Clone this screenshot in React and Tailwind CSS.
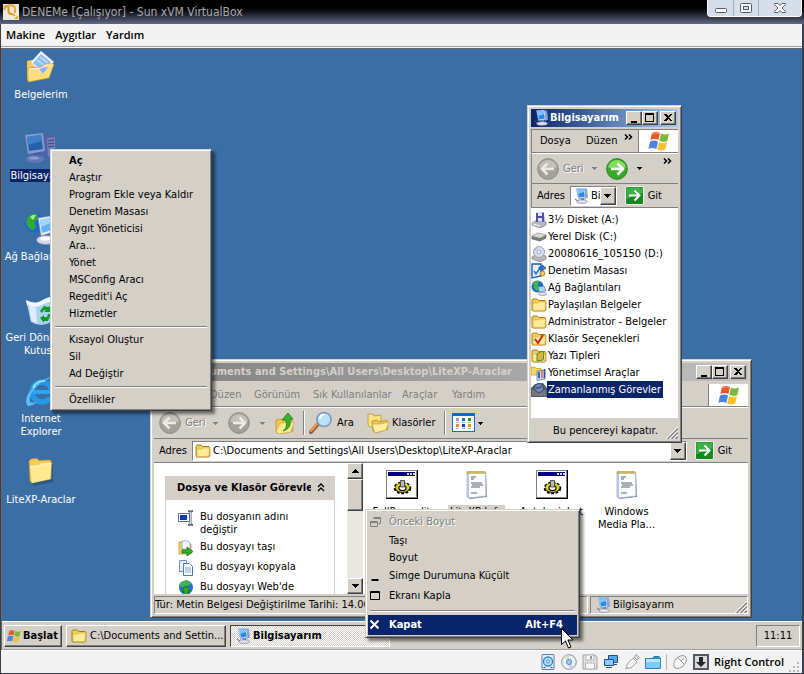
import { clsx } from 'clsx'

const raised = 'bg-[#d4d0c8] border border-t-white border-l-white border-r-[#404040] border-b-[#404040] shadow-[inset_-1px_-1px_0_#808080]'
const sunken = 'border border-t-[#808080] border-l-[#808080] border-r-white border-b-white'
const frame = 'bg-[#d4d0c8] border border-t-[#d4d0c8] border-l-[#d4d0c8] border-r-[#404040] border-b-[#404040] shadow-[inset_1px_1px_0_#fff,inset_-1px_-1px_0_#808080]'
const menuFrame = 'bg-[#d4d0c8] border border-t-[#d4d0c8] border-l-[#d4d0c8] border-r-[#404040] border-b-[#404040] shadow-[inset_1px_1px_0_#fff,inset_-1px_-1px_0_#808080,3px_3px_3px_rgba(0,0,0,0.5)]'
const embossed = 'text-[#808080] [text-shadow:1px_1px_0_#fff]'

/* ---------- icons ---------- */

function Folder({ className = 'size-4' }) {
  return (
    <svg viewBox="0 0 16 16" className={clsx('shrink-0', className)}>
      <path d="M1 3.200 2 2h4.200l1.300 1.500H14l.8 1V13l-1 1H1.800L1 13z" fill="#f3cf5b" stroke="#a87c14" />
      <path d="M2 6h5.200l1-1h6.300L14 13.400H2z" fill="#fdeb9a" stroke="#d9ac39" strokeWidth=".6" />
    </svg>
  )
}

function BigFolder() {
  return (
    <svg viewBox="0 0 32 32" className="size-8 shrink-0">
      <path d="M6 8l2-2 20 2v18L9 30l-2-2z" fill="#0003" />
      <path d="M4 5l2-2 6-.6L14 4.500l11-.5 1.500 2L26 23 7 27l-2-2z" fill="#f2cc58" stroke="#c29623" strokeWidth=".6" />
      <path d="M5 10l8-.5 3-2 10.500-.5L25 23 7 27z" fill="#ffe993" />
      <path d="M5.500 10.500l8-.5 3-2 9.500-.5" fill="none" stroke="#fff7cf" />
    </svg>
  )
}

function Documents() {
  return (
    <svg viewBox="0 0 32 32" className="size-8 shrink-0">
      <path d="M2 10l5-1 3 2v17l-6 2-2-2z" fill="#f3c95b" />
      <path d="M16 0 29 11 17 24 6 11z" fill="#eef5ff" />
      <path d="M16 3 26 11 17 20 8 12z" fill="#8fbdf5" />
      <path d="M15 6l8 6M12 9l8 6" stroke="#c7e0ff" strokeWidth="1.500" />
      <path d="M3 17l13-1 5-3 8 0-5 14-21 4z" fill="#ffdf7c" stroke="#c9962a" strokeWidth=".7" />
      <path d="M14 17l9-1-5 7z" fill="#7fb8ee" />
      <path d="M4 18l12-1 5-3 7 0" fill="none" stroke="#fff5c6" />
    </svg>
  )
}

function BigComputer() {
  return (
    <svg viewBox="0 0 32 32" className="size-8 shrink-0">
      <path d="M19 3l8-1 4 2v19l-8 3-4-2z" fill="#5362a4" />
      <path d="M22 6l8-1v17l-7 3z" fill="#7480b9" />
      <path d="M23 9l6-1M23 12l6-1M23 15l6-1" stroke="#394582" />
      <path d="M0 3l18-2 2 18-17 3z" fill="#8a98c9" />
      <path d="M2 5l14-2 2 14-14 2z" fill="#2361b0" />
      <path d="M2 5l14-2 .8 6L3 13z" fill="#3f80c8" />
      <path d="M9 21h6l1 5H9z" fill="#4b57a1" />
      <ellipse cx="10" cy="27" rx="9" ry="3.800" fill="#6775b5" />
      <ellipse cx="9" cy="26" rx="5" ry="1.600" fill="#8f9bd0" />
    </svg>
  )
}

function BigNetwork() {
  return (
    <svg viewBox="0 0 32 32" className="size-8 shrink-0">
      <circle cx="10" cy="10" r="10" fill="#1f68d4" />
      <path d="M2 5q5-5 10-4l1 5-4 3 2 4-3 5-5-4-2-5z" fill="#35a936" />
      <path d="M5 4q3-3 6-2l-3 5z" fill="#a8ec86" />
      <path d="M13 5l18-3v16l-15 5z" fill="#e7ecf8" stroke="#7684ad" strokeWidth=".6" />
      <path d="M15 7l15-3v12l-13 4z" fill="#63b2f4" />
      <path d="M15 7l15-3v4l-14 6z" fill="#9ed5ff" />
      <ellipse cx="21" cy="27" rx="9.500" ry="4.500" fill="#d6d7ee" stroke="#8689ae" strokeWidth=".6" />
      <ellipse cx="20" cy="25.500" rx="5" ry="2" fill="#fff" />
    </svg>
  )
}

function RecycleBin() {
  return (
    <svg viewBox="0 0 32 32" className="size-8 shrink-0">
      <path d="M1 6q9 5 15 1t15-5l-5 26q-10 6-20 0z" fill="#a9d3f4" />
      <path d="M1 6q9 5 15 1t15-5l-1 5q-6 0-13 4T2 11z" fill="#edf8ff" />
      <path d="M4 12l7 2 1 15-6-2z" fill="#fff" opacity=".6" />
      <path d="M15 17l4-5 4 1 2-1v6h-6l2-2h-2l-2 3zM26 20l-3 7h-4v2l-4-5 4-3v2h3l1-3z" fill="#159a20" />
    </svg>
  )
}

function InternetExplorer() {
  return (
    <svg viewBox="0 0 32 32" className="size-8 shrink-0">
      <circle cx="17" cy="17" r="10" fill="none" stroke="#2497e6" strokeWidth="5.500" />
      <path d="M8 15h22v4H8z" fill="#2da5f0" />
      <path d="M20 22h12v-3H20z" fill="#3a6ea5" />
      <path d="M2 30Q-2 22 10 11T31 3q-10-1-19 8T5 27q3 2 8-1-8 7-11 4z" fill="#56c2fb" />
      <path d="M8 13q3-8 12-7" stroke="#a9e5ff" strokeWidth="1.500" fill="none" />
    </svg>
  )
}

function Computer({ className = 'size-4' }) {
  return (
    <svg viewBox="0 0 16 16" className={clsx('shrink-0', className)}>
      <path d="M10 1l4-.5 1 9-3 1.500z" fill="#8da7d5" />
      <path d="M3.500.5l8-.5 1.500 9.500-7.500 1.300z" fill="#dbe8fa" stroke="#6383bd" strokeWidth=".5" />
      <path d="M4.500 1.400l6-.5 1.300 7.600-5.800 1z" fill="#2b87e6" />
      <path d="M4.500 1.400l6-.5.6 3.200L5 6z" fill="#7cc4ff" />
      <path d="M7.500 10.500l3.500-.5.5 2.500H8z" fill="#7080b0" />
      <ellipse cx="9" cy="13.600" rx="5.500" ry="1.900" fill="#dfe3ef" stroke="#6c7696" strokeWidth=".6" />
      <path d="M2 11l3 2" stroke="#59679a" />
    </svg>
  )
}

function WindowsFlag({ className = 'h-5 w-6' }) {
  return (
    <svg viewBox="0 0 24 20" className={clsx('shrink-0', className)}>
      <path d="M5 2q4-2 8 0l-1.600 7q-4-2-8 0z" fill="#e8572b" />
      <path d="M14 2.500q4 2 8 0L20.300 10q-4 2-8-.2z" fill="#7cb93a" />
      <path d="M3 10.500q4-2 8 0L9.400 18q-4-2-8 0z" fill="#4a86dd" />
      <path d="M12 11q4 2 8 0l-1.700 7.400q-4 2-8 0z" fill="#f8c22e" />
      <path d="M5 3q3-2 7-.5" stroke="#f59a72" fill="none" />
    </svg>
  )
}

function RoundArrow({ forward, active }) {
  return (
    <svg viewBox="0 0 22 22" className="size-[22px] shrink-0">
      <circle cx="11" cy="11" r="10.400" fill={active ? '#37a926' : '#a3a19c'} stroke={active ? '#237a1a' : '#86847f'} strokeWidth=".8" />
      <path d="M2 9a9.300 9.300 0 0 1 18 0q-9 6-18 0z" fill={active ? '#86db66' : '#c2c0bb'} />
      <path d={forward ? 'M5 11h11M11.500 5.500 17 11l-5.500 5.500' : 'M17 11H6M10.500 5.500 5 11l5.500 5.500'} fill="none" stroke={active ? '#fff' : '#ebe9e4'} strokeWidth="2.600" />
    </svg>
  )
}

function Caret({ className = 'text-black' }) {
  return (
    <svg viewBox="0 0 7 4" className={clsx('h-1 w-[7px] shrink-0', className)} shapeRendering="crispEdges">
      <path d="M0 0h7L3.500 4z" fill="currentColor" />
    </svg>
  )
}

function SmallCaret({ className = 'text-black' }) {
  return (
    <svg viewBox="0 0 5 3" className={clsx('h-[3px] w-[5px] shrink-0', className)} shapeRendering="crispEdges">
      <path d="M0 0h5L2.500 3z" fill="currentColor" />
    </svg>
  )
}

function FolderUp() {
  return (
    <svg viewBox="0 0 20 22" className="h-[22px] w-5 shrink-0">
      <path d="M1 8l6-1 2 2 8-1 1 11-14 3-3-2z" fill="#f0c74f" stroke="#b98e23" strokeWidth=".7" />
      <path d="M1 20l4-9 14-1-3 10-12 2z" fill="#ffe88e" stroke="#c79b2f" strokeWidth=".6" />
      <path d="M8 19q5-3 3-11H7l6-7 5 6-3 .5q2 9-7 11.500z" fill="#34b52a" stroke="#127212" strokeWidth=".7" />
    </svg>
  )
}

function Magnifier() {
  return (
    <svg viewBox="0 0 24 24" className="size-6 shrink-0">
      <path d="M2 21 9 13" stroke="#8a5d36" strokeWidth="4" strokeLinecap="round" />
      <path d="M2 20 8 13" stroke="#ef9a4c" strokeWidth="2" strokeLinecap="round" />
      <circle cx="15" cy="8.500" r="7" fill="#b9e3fb" stroke="#7b93c9" strokeWidth="1.600" />
      <path d="M10.500 8q1-4 5-4.500" stroke="#fff" strokeWidth="2" fill="none" />
    </svg>
  )
}

function FoldersIcon() {
  return (
    <svg viewBox="0 0 24 22" className="h-[22px] w-6 shrink-0">
      <path d="M2 2l5 0 1 2 7-1 0 10-11 2-2-2z" fill="#ffe283" stroke="#bd932c" strokeWidth=".8" />
      <path d="M6 9l5-1 2 2 8-2 1 9-12 4-3-2z" fill="#f1c952" stroke="#b78b23" strokeWidth=".8" />
      <path d="M6 12l8 0 9-2-3 8-11 3z" fill="#ffeda0" stroke="#c59b36" strokeWidth=".6" />
    </svg>
  )
}

function Views() {
  return (
    <svg viewBox="0 0 24 20" className="h-5 w-6 shrink-0" shapeRendering="crispEdges">
      <path d="M0 0h23v19H0z" fill="#1766d8" />
      <path d="M1 3h21v15H1z" fill="#fff" />
      <path d="M4 5h3v3H4z" fill="#a396cf" />
      <path d="M10 5h3v3h-3z" fill="#167cd4" />
      <path d="M16 5h3v3h-3z" fill="#169b1b" />
      <path d="M4 11h3v3H4z" fill="#fb7c52" />
      <path d="M10 11h3v3h-3z" fill="#173c9c" />
      <path d="M16 11h3v3h-3z" fill="#d39d0b" />
      <path d="M4 9h3v1H4zM10 9h3v1h-3zM16 9h3v1h-3zM4 15h3v1H4zM10 15h3v1h-3zM16 15h3v1h-3z" fill="#b4b4b4" />
    </svg>
  )
}

function GoIcon() {
  return (
    <svg viewBox="0 0 19 19" className="size-[19px] shrink-0">
      <rect x=".5" y=".5" width="18" height="18" rx="1.500" fill="#128a1c" stroke="#e9f4e6" />
      <path d="M1.500 1.500h16v6q-8 0-16 6z" fill="#3fae49" />
      <path d="M4 9.500h10M9.500 4.500l5 5-5 5" fill="none" stroke="#fff" strokeWidth="2" />
    </svg>
  )
}

function Grip() {
  return (
    <svg viewBox="0 0 12 12" className="size-3 shrink-0 self-end">
      <path d="M0 12 12 0M4 12l8-8M8 12l4-4" stroke="#fff" strokeWidth="1.200" />
      <path d="M1.500 12 12 1.500M5.500 12 12 5.500M9.500 12 12 9.500" stroke="#808080" strokeWidth="1.400" />
    </svg>
  )
}

function GearApp() {
  return (
    <svg viewBox="0 0 32 30" className="h-[30px] w-8 shrink-0">
      <g shapeRendering="crispEdges">
        <path d="M0 0h32v29H0z" fill="#000" />
        <path d="M0 0h31v28H0z" fill="#808080" />
        <path d="M1 1h29v26H1z" fill="#fff" />
        <path d="M2 2h27v4H2z" fill="#000080" />
        <path d="M21 3h2v2h-2zM24 3h2v2h-2zM27 3h2v2h-2z" fill="#d4d0c8" />
      </g>
      <ellipse cx="16.500" cy="18" rx="7.500" ry="5" fill="#000" stroke="#000" strokeWidth="2.600" strokeDasharray="2.600 1.600" />
      <ellipse cx="16.500" cy="17.500" rx="7" ry="4.500" fill="#e2da1d" stroke="#77720c" strokeWidth=".8" strokeDasharray="2 1.500" />
      <ellipse cx="16.500" cy="18" rx="3.600" ry="2.500" fill="#fff" stroke="#000" strokeWidth="1.200" />
      <path d="M14.500 10.500h4V17h-4z" fill="#b9b9b9" stroke="#333" strokeWidth=".8" />
    </svg>
  )
}

function NotepadFile() {
  return (
    <svg viewBox="0 0 32 30" className="h-[30px] w-8 shrink-0">
      <path d="M7 2h18l1 25-17 2-2-1z" fill="#7f8fa5" />
      <path d="M6 2h18.500L25 26l-16 2-3-1z" fill="#fbfdff" stroke="#9fb1cc" strokeWidth=".8" />
      <path d="M6 2v25l2 1V2z" fill="#b6c6e8" />
      <path d="M10 7h5M10 9h3M10 13h11M11 15h11M10 17h9M10 23h6" stroke="#59626c" />
      <path d="M7 1v3M9 1v3M11 1v3M13 1v3M15 1v3M17 1v3M19 1v3M21 1v3M23 1v3" stroke="#c79a19" strokeWidth="1.200" />
    </svg>
  )
}

function Floppy() {
  return (
    <svg viewBox="0 0 16 16" className="size-4 shrink-0">
      <path d="M1 11l5-3 9 2v3l-6 3-8-3z" fill="#b7b7bd" stroke="#6f6f78" strokeWidth=".6" />
      <path d="M5 1l8-.5.5 9L5 10z" fill="#4d50a7" />
      <path d="M7 1h4v3H7zM7 6h4v3.500H7z" fill="#e4e4f4" />
      <path d="M2 12l7 2" stroke="#fff" />
    </svg>
  )
}

function Drive() {
  return (
    <svg viewBox="0 0 16 16" className="size-4 shrink-0">
      <path d="M1 7l6-3 8 2v3l-6 3-8-2z" fill="#7c7c7c" stroke="#555" strokeWidth=".6" />
      <path d="M1 7l6-3 8 2-6 3z" fill="#d7d7d7" />
      <path d="M11 10h2" stroke="#43c743" />
    </svg>
  )
}

function CdDrive() {
  return (
    <svg viewBox="0 0 16 16" className="size-4 shrink-0">
      <path d="M1 11l5-3 9 2v3l-6 3-8-3z" fill="#b9b9bf" stroke="#6f6f78" strokeWidth=".6" />
      <circle cx="8" cy="6" r="5.500" fill="#dcdcf4" stroke="#8585a6" strokeWidth=".7" />
      <circle cx="8" cy="6" r="1.800" fill="#fff" stroke="#8585a6" strokeWidth=".7" />
      <path d="M4 4q1-2 3-2" stroke="#b5a4e8" fill="none" />
    </svg>
  )
}

function ControlPanel() {
  return (
    <svg viewBox="0 0 16 16" className="size-4 shrink-0">
      <path d="M1 1h9v12l-9 2z" fill="#e6f1ff" stroke="#1b5fae" strokeWidth="1.400" />
      <path d="M3 8l2 3 4-6" stroke="#2675cc" strokeWidth="1.500" fill="none" />
      <path d="M8 4h3V2l4 3-4 3V6H8z" fill="#2f7fd6" stroke="#174f91" strokeWidth=".8" />
      <circle cx="11.500" cy="10.500" r="2.500" fill="#f6cb55" stroke="#926414" strokeWidth=".7" />
    </svg>
  )
}

function NetGlobe() {
  return (
    <svg viewBox="0 0 16 16" className="size-4 shrink-0">
      <circle cx="6.500" cy="6.500" r="6" fill="#1d6ec9" />
      <path d="M2 3q3-3 6-2l-1 4 2 3-3 3-3-3z" fill="#3cb54a" />
      <path d="M7 7l6-1 2 5-7 1z" fill="#a5d8fb" stroke="#4d6b9d" strokeWidth=".6" />
      <ellipse cx="11.500" cy="14" rx="4" ry="1.600" fill="#dedeee" stroke="#777b9c" strokeWidth=".6" />
    </svg>
  )
}

function FolderWith({ children }) {
  return (
    <svg viewBox="0 0 16 16" className="size-4 shrink-0">
      <path d="M1 3.200 2 2h4.200l1.300 1.500H14l.8 1V13l-1 1H1.800L1 13z" fill="#f3cf5b" stroke="#a87c14" />
      <path d="M2 6h5.200l1-1h6.300L14 13.400H2z" fill="#fdeb9a" stroke="#d9ac39" strokeWidth=".6" />
      {children}
    </svg>
  )
}

function AdminTools() {
  return (
    <svg viewBox="0 0 16 16" className="size-4 shrink-0">
      <path d="M0 2h4l1 1.500h5V10H0z" fill="#f6d565" stroke="#c09226" strokeWidth=".7" />
      <path d="M6 6l8-1v9l-8 1.500z" fill="#c8d6f2" stroke="#5067a0" strokeWidth=".7" />
      <path d="M8 7v6" stroke="#3563c8" strokeWidth="2" />
      <path d="M11 5v8" stroke="#e06a2d" strokeWidth="1.500" />
      <path d="M13.500 4v9" stroke="#2d52a0" strokeWidth="1.500" />
    </svg>
  )
}

function Scheduled() {
  return (
    <svg viewBox="0 0 16 16" className="size-4 shrink-0">
      <path d="M0 6 4 2l8-1 4 5v9H0z" fill="#4e5b6b" />
      <path d="M1 8h14v6H1z" fill="#74777b" />
      <circle cx="8" cy="6" r="4.500" fill="#6e89b5" stroke="#39475f" />
      <path d="M8 6l3-2M8 6H5" stroke="#223150" />
    </svg>
  )
}

function RenameIcon() {
  return (
    <svg viewBox="0 0 16 16" className="size-4 shrink-0">
      <path d="M.5 3.500h11v8H.5z" fill="#fff" stroke="#5c6b9c" />
      <path d="M2 5h7v5H2z" fill="#0b3bb5" />
      <path d="M10 1q2 0 2.500 1Q13 1 15 1M12.500 2v12M10 15q2 0 2.500-1 .5 1 2.500 1" fill="none" stroke="#5e6682" strokeWidth="2" />
      <path d="M12.500 2v12" stroke="#c9cfe4" />
    </svg>
  )
}

function MoveIcon() {
  return (
    <svg viewBox="0 0 16 16" className="size-4 shrink-0">
      <path d="M1 2h5l1 2h6v10H1z" fill="#f4d36d" stroke="#b78b25" strokeWidth=".7" />
      <path d="M4 1h6l2 2v6H4z" fill="#f4f9ff" stroke="#7790bb" strokeWidth=".7" />
      <path d="M4 10h5V7l6 4.500L9 16v-3H4z" fill="#2fb129" stroke="#0e6a10" strokeWidth=".7" />
    </svg>
  )
}

function CopyIcon() {
  return (
    <svg viewBox="0 0 16 16" className="size-4 shrink-0">
      <path d="M1.500.500h7v11h-7z" fill="#e8f1ff" stroke="#6c8fc8" />
      <path d="M5.500 3.500h6l3 3v9h-9z" fill="#fff" stroke="#4a78be" />
      <path d="M7 8h6M7 10h6M7 12h6" stroke="#7aa6e3" />
    </svg>
  )
}

function WebIcon() {
  return (
    <svg viewBox="0 0 16 16" className="size-4 shrink-0">
      <circle cx="8" cy="7.500" r="7" fill="#2674cb" />
      <path d="M2 3q5-4 9-2l2 3-4 2-5 1-3-1z" fill="#3fb448" />
      <path d="M8 6l5 5h-3v5H6v-5H3z" fill="#2dac27" stroke="#0f6412" strokeWidth=".7" />
    </svg>
  )
}

function VBoxLogo() {
  return (
    <svg viewBox="0 0 16 16" className="size-4 shrink-0">
      <path d="M0 0h16v16H0z" fill="#efe8dd" />
      <path d="M1.500 6V5q0-3 2-3t2 3v2q0 3 3 3 2 0 3 2" fill="none" stroke="#e39a1f" strokeWidth="2" />
      <path d="M5 1.500q7-1 7 3V9" fill="none" stroke="#f2a933" strokeWidth="2" />
      <path d="M11 15l4 0v-4z" fill="#f2a51d" />
    </svg>
  )
}

function Chevrons() {
  return (
    <svg viewBox="0 0 9 6" className="h-1.5 w-[9px] shrink-0">
      <path d="M1 .5 3.500 3 1 5.500M5 .5 7.500 3 5 5.500" fill="none" stroke="#000" strokeWidth="1.500" />
    </svg>
  )
}

/* ---------- window parts ---------- */

const glyphs = {
  min: 'M2 8h6v2H2z',
  max: 'M0 0h9v9H0zM1 2v6h7V2z',
  close: 'M1 1h2l2 2 2-2h2L6 4.500l3 3.500H7L5 6 3 8H1l3-3.500z',
}

function CaptionButton({ kind, label }) {
  return (
    <button type="button" aria-label={label} className={clsx('flex h-[14px] w-4 items-center justify-center', raised)}>
      <svg viewBox="0 0 10 10" className="size-[10px]" shapeRendering="crispEdges">
        <path d={glyphs[kind]} fillRule="evenodd" />
      </svg>
    </button>
  )
}

function CaptionButtons() {
  return (
    <div className="ml-auto flex shrink-0 pr-0.5">
      <CaptionButton kind="min" label="Simge durumuna küçült" />
      <CaptionButton kind="max" label="Ekranı kapla" />
      <span className="w-0.5" />
      <CaptionButton kind="close" label="Kapat" />
    </div>
  )
}

function AddressBar({ value, icon, id }) {
  return (
    <div className="flex h-6 items-center border-b border-[#808080] pl-[5px] pr-4">
      <label htmlFor={id} className="w-[33px] shrink-0">Adres</label>
      <div className={clsx('flex h-5 min-w-0 flex-1 items-center bg-white pl-0.5', sunken)}>
        {icon}
        <input id={id} defaultValue={value} className="ml-0.5 min-w-0 flex-1 bg-transparent outline-none" />
        <button type="button" aria-label="Adres listesi" className={clsx('flex h-[18px] w-4 shrink-0 items-center justify-center', raised)}>
          <Caret />
        </button>
      </div>
      <button type="button" className="ml-2 flex items-center gap-1">
        <GoIcon /> Git
      </button>
    </div>
  )
}

function FileItem({ icon, label, selected }) {
  return (
    <button type="button" className="flex w-[75px] flex-col items-center gap-[5px] leading-[13px]">
      {icon}
      <span className={clsx('px-0.5', selected && 'bg-[#d4d0c8]')}>{label}</span>
    </button>
  )
}

const tasks = [
  { icon: <RenameIcon />, label: 'Bu dosyanın adını değiştir' },
  { icon: <MoveIcon />, label: 'Bu dosyayı taşı' },
  { icon: <CopyIcon />, label: 'Bu dosyayı kopyala' },
  { icon: <WebIcon />, label: "Bu dosyayı Web'de yayımla" },
]

function ExplorerWindow() {
  return (
    <section className={clsx('absolute left-[148px] top-[310px] flex h-[259px] w-[602px] flex-col p-[3px]', frame)}>
      <header className="flex h-[18px] shrink-0 items-center bg-linear-to-r from-[#808080] to-[#c0c0c0] pl-5 font-bold text-[#d4d0c8]">
        <h2 className="whitespace-nowrap">C:\Documents and Settings\All Users\Desktop\LiteXP-Araclar</h2>
        <CaptionButtons />
      </header>
      <nav className="mt-[3px] flex h-[23px] shrink-0 items-center border-b border-[#808080] pl-1.5 text-[#808080]">
        <button type="button" className="w-[50px] text-left">Dosya</button>
        <button type="button" className="w-11 text-left">Düzen</button>
        <button type="button" className="w-[59px] text-left">Görünüm</button>
        <button type="button" className="w-[89px] whitespace-nowrap text-left">Sık Kullanılanlar</button>
        <button type="button" className="w-[50px] text-left">Araçlar</button>
        <button type="button">Yardım</button>
        <span className="ml-auto flex h-full w-10 items-center justify-center border-l border-[#808080] bg-white">
          <WindowsFlag />
        </span>
      </nav>
      <div className="flex h-8 shrink-0 items-center border-b border-t border-b-[#808080] border-t-white pl-[5px]">
        <button type="button" disabled className={clsx('flex w-[54px] items-center gap-1', embossed)}>
          <RoundArrow /> Geri
        </button>
        <SmallCaret className="text-[#808080]" />
        <button type="button" disabled aria-label="İleri" className="mx-2.5">
          <RoundArrow forward />
        </button>
        <SmallCaret className="text-[#808080]" />
        <button type="button" aria-label="Yukarı" className="ml-2.5"><FolderUp /></button>
        <span className="ml-2 h-6 w-0.5 border-l border-r border-l-[#808080] border-r-white" />
        <button type="button" className="ml-1 flex w-[57px] items-center gap-1"><Magnifier /> Ara</button>
        <button type="button" className="flex w-[78px] items-center gap-0.5"><FoldersIcon /> Klasörler</button>
        <span className="h-6 w-0.5 border-l border-r border-l-[#808080] border-r-white" />
        <button type="button" aria-label="Görünümler" className="ml-1.5 flex items-center gap-0.5"><Views /><SmallCaret /></button>
      </div>
      <AddressBar id="explorer-address" value="C:\Documents and Settings\All Users\Desktop\LiteXP-Araclar" icon={<Folder />} />
      <div className="flex min-h-0 flex-1 bg-white">
        <aside className="w-[193px] overflow-hidden pl-[11px] pt-[13px]">
          <div className="w-[170px]">
            <button type="button" className="flex h-[23px] w-full items-center justify-between bg-[#d4d0c8] pl-3 pr-2.5 font-bold">
              <span className="w-[134px] overflow-hidden whitespace-nowrap text-left">Dosya ve Klasör Görevleri</span>
              <svg viewBox="0 0 8 9" className="h-[9px] w-2"><path d="M1 4l3-3 3 3M1 8l3-3 3 3" fill="none" stroke="#000" strokeWidth="1.300" /></svg>
            </button>
            <ul className="flex flex-col gap-1 border border-[#d4d0c8] pl-3 pt-2.5 leading-[13px]">
              {tasks.map((t) => (
                <li key={t.label}>
                  <a href="#" className="flex w-[135px] gap-1.5">{t.icon}<span>{t.label}</span></a>
                </li>
              ))}
            </ul>
          </div>
        </aside>
        <div className="flex w-4 flex-col bg-[#eae8e3]">
          <button type="button" aria-label="Yukarı kaydır" className={clsx('flex h-4 shrink-0 items-center justify-center', raised)}>
            <Caret className="rotate-180" />
          </button>
          <div className={clsx('h-8 shrink-0', raised)} />
          <button type="button" aria-label="Aşağı kaydır" className={clsx('mt-auto flex h-4 shrink-0 items-center justify-center', raised)}>
            <Caret />
          </button>
        </div>
        <div className="flex flex-1 items-start pl-px pt-[7px]">
          <FileItem icon={<GearApp />} label="FullRemodit" />
          <FileItem icon={<NotepadFile />} label="LiteXP-Info" selected />
          <FileItem icon={<GearApp />} label="Autologinhat" />
          <FileItem icon={<NotepadFile />} label="Windows Media Pla..." />
        </div>
      </div>
      <footer className="mt-0.5 flex h-[18px] shrink-0 gap-0.5">
        <span className={clsx('flex w-[434px] items-center overflow-hidden whitespace-nowrap', sunken)}>
          Tür: Metin Belgesi Değiştirilme Tarihi: 14.06.2008
        </span>
        <span className={clsx('flex flex-1 items-center gap-0.5 pl-1', sunken)}>
          <Computer /> Bilgisayarım
          <span className="ml-auto flex self-end"><Grip /></span>
        </span>
      </footer>
    </section>
  )
}

const places = [
  { icon: <Floppy />, label: '3½ Disket (A:)' },
  { icon: <Drive />, label: 'Yerel Disk (C:)' },
  { icon: <CdDrive />, label: '20080616_105150 (D:)' },
  { icon: <ControlPanel />, label: 'Denetim Masası' },
  { icon: <NetGlobe />, label: 'Ağ Bağlantıları' },
  { icon: <Folder />, label: 'Paylaşılan Belgeler' },
  { icon: <Folder />, label: 'Administrator - Belgeler' },
  { icon: <FolderWith><path d="M4 8l3 4 5-8" fill="none" stroke="#c02a1c" strokeWidth="2" /></FolderWith>, label: 'Klasör Seçenekleri' },
  { icon: <FolderWith><path d="M6 6l5-3 2 2-1 7-6 1z" fill="#e3b23a" stroke="#3f8e36" /></FolderWith>, label: 'Yazı Tipleri' },
  { icon: <AdminTools />, label: 'Yönetimsel Araçlar' },
  { icon: <Scheduled />, label: 'Zamanlanmış Görevler', selected: true },
]

function ComputerWindow() {
  return (
    <section className={clsx('absolute left-[525px] top-[56px] flex h-[338px] w-[155px] flex-col p-[3px]', frame)}>
      <header className="flex h-[18px] shrink-0 items-center gap-px bg-linear-to-r from-[#0a246a] to-[#a6caf0] pl-0.5 font-bold text-white">
        <Computer />
        <h2 className="w-0 flex-1 overflow-hidden whitespace-nowrap">Bilgisayarım</h2>
        <CaptionButtons />
      </header>
      <nav className="mt-0.5 flex h-6 shrink-0 items-center border-b border-l border-t border-[#808080] pl-2">
        <button type="button" className="w-[46px] text-left">Dosya</button>
        <button type="button" className="w-[38px] text-left">Düzen</button>
        <span className="self-start pt-1"><Chevrons /></span>
        <span className="ml-auto flex h-full w-10 items-center justify-center border-l border-[#808080] bg-white">
          <WindowsFlag />
        </span>
      </nav>
      <div className="flex h-[31px] shrink-0 items-center border border-r-0 border-[#808080] border-t-white pl-[5px]">
        <button type="button" disabled className={clsx('flex w-[55px] items-center gap-1', embossed)}>
          <RoundArrow /> Geri
        </button>
        <SmallCaret className="text-[#808080]" />
        <button type="button" aria-label="İleri" className="mx-[9px]"><RoundArrow forward active /></button>
        <SmallCaret />
        <span className="ml-auto self-start pr-1.5 pt-1"><Chevrons /></span>
      </div>
      <div className="border-l border-[#808080]">
        <AddressBar id="computer-address" value="Bilgisayarım" icon={<Computer />} />
      </div>
      <ul className="flex-1 bg-white pt-[3px]">
        {places.map((p) => (
          <li key={p.label}>
            <button type="button" className="flex h-[17px] items-center whitespace-nowrap">
              {p.icon}
              <span className={clsx('flex h-[17px] items-center pl-px pr-0.5', p.selected && 'bg-[#0a246a] text-white')}>{p.label}</span>
            </button>
          </li>
        ))}
      </ul>
      <footer className="flex h-[21px] shrink-0 items-center pl-[22px] pt-1">
        Bu pencereyi kapatır.
        <span className="ml-auto flex self-end"><Grip /></span>
      </footer>
    </section>
  )
}

function Separator() {
  return (
    <li role="separator" className="flex h-[9px] items-center px-0.5">
      <span className="h-0.5 w-full border-b border-t border-b-white border-t-[#808080]" />
    </li>
  )
}

const desktopMenu = [
  'Aç', 'Araştır', 'Program Ekle veya Kaldır', 'Denetim Masası', 'Aygıt Yöneticisi', 'Ara...', 'Yönet',
  'MSConfig Aracı', "Regedit'i Aç", 'Hizmetler', null, 'Kısayol Oluştur', 'Sil', 'Ad Değiştir', null, 'Özellikler',
]

function DesktopMenu() {
  return (
    <ul className={clsx('absolute left-[48px] top-[100px] w-[162px] p-0.5', menuFrame)}>
      {desktopMenu.map((item, i) => item === null ? <Separator key={i} /> : (
        <li key={item}>
          <button type="button" className={clsx('flex h-[17px] w-full items-center pl-4', i === 0 && 'font-bold')}>{item}</button>
        </li>
      ))}
    </ul>
  )
}

const systemMenu = [
  { label: 'Önceki Boyut', icon: 'M3 0h7v6H8M3 1h7M0 4h7v5H0zM0 5h7', disabled: true, tall: true },
  { label: 'Taşı' },
  { label: 'Boyut' },
  { label: 'Simge Durumuna Küçült', icon: 'M1 8h7M1 9h7', tall: true },
  { label: 'Ekranı Kapla', icon: 'M0 0h9v8H0zM0 1h9', tall: true },
  null,
  { label: 'Kapat', icon: 'M0 0l8 8M8 0l-8 8', shortcut: 'Alt+F4', active: true, tall: true },
]

function SystemMenu() {
  return (
    <ul className={clsx('absolute left-[363px] top-[460px] w-[215px] p-0.5', menuFrame)}>
      {systemMenu.map((m, i) => m === null ? <Separator key={i} /> : (
        <li key={m.label}>
          <button type="button" disabled={m.disabled}
            className={clsx('flex w-full items-center pl-0.5 pr-3.5', m.tall ? 'h-5' : 'h-[17px]', m.disabled && embossed, m.active && 'bg-[#0a246a] font-bold text-white')}>
            <span className="w-[19px]">
              {m.icon && (
                <svg viewBox="0 0 11 10" className="h-2.5 w-[11px]">
                  <path d={m.icon} transform="translate(.5 .5)" fill="none" stroke="currentColor" strokeWidth={m.active ? 2 : 1} />
                </svg>
              )}
            </span>
            {m.label}
            {m.shortcut && <span className="ml-auto">{m.shortcut}</span>}
          </button>
        </li>
      ))}
    </ul>
  )
}

const desktopIcons = [
  { icon: <Documents />, label: 'Belgelerim' },
  { icon: <BigComputer />, label: 'Bilgisayarım', selected: true },
  { icon: <BigNetwork />, label: 'Ağ Bağlantıları' },
  { icon: <RecycleBin />, label: 'Geri Dönüşüm Kutusu' },
  { icon: <InternetExplorer />, label: 'Internet Explorer' },
  { icon: <BigFolder />, label: 'LiteXP-Araclar' },
]

function Taskbar() {
  return (
    <footer className="flex h-7 shrink-0 items-center gap-1 border-t border-white bg-[#d4d0c8] px-0.5">
      <button type="button" className={clsx('flex h-[22px] w-[58px] items-center gap-px pl-px font-bold', raised)}>
        <WindowsFlag className="h-3.5 w-4" /> Başlat
      </button>
      <button type="button" className={clsx('flex h-[22px] w-[160px] items-center gap-[3px] whitespace-nowrap pl-1', raised)}>
        <Folder /> C:\Documents and Settin...
      </button>
      <button type="button" className="flex h-[22px] w-[160px] items-center gap-0.5 border border-b-white border-l-[#404040] border-r-white border-t-[#404040] bg-[repeating-conic-gradient(#fff_0_25%,#d4d0c8_0_50%)] bg-[length:2px_2px] pl-1 font-bold">
        <Computer /> Bilgisayarım
      </button>
      <time className={clsx('ml-auto flex h-[22px] w-11 items-center justify-center', sunken)}>11:11</time>
    </footer>
  )
}

function Guest() {
  return (
    <main className="relative flex flex-1 flex-col bg-[#3a6ea5]">
      <div className="flex w-[78px] flex-1 flex-col pt-0.5 text-center leading-[13px] text-white">
        {desktopIcons.map((d) => (
          <button type="button" key={d.label} className="flex h-[81px] flex-col items-center gap-[5px]">
            {d.icon}
            <span className={clsx(d.selected && 'bg-[#0a246a] px-px')}>{d.label}</span>
          </button>
        ))}
      </div>
      <Taskbar />
      <ExplorerWindow />
      <ComputerWindow />
      <DesktopMenu />
      <SystemMenu />
      <svg viewBox="0 0 12 21" className="absolute left-[559px] top-[579px] h-[21px] w-3">
        <path d="M.5.500v16l4-3.500 3 7 2.500-1-3-7h5z" fill="#fff" stroke="#000" />
      </svg>
    </main>
  )
}

/* ---------- host window ---------- */

function HostTitle() {
  return (
    <header className="flex h-6 items-start bg-linear-to-b from-black from-20% to-[#626a86] pl-[3px] text-[#a9a9a9]">
      <div className="flex h-full items-center gap-[3px]">
        <VBoxLogo />
        <h1 className="text-[12px]">DENEMe [Çalışıyor] - Sun xVM VirtualBox</h1>
      </div>
      <div className="ml-auto mr-0.5 flex h-[17px] overflow-hidden rounded-b border border-t-0 border-white bg-[#d5dde8]">
        <button type="button" aria-label="Küçült" className="flex w-[25px] items-center justify-center">
          <svg viewBox="0 0 12 5" className="mt-1 h-[5px] w-3"><rect x=".5" y=".5" width="11" height="4" rx="1" fill="#fff" stroke="#565c70" /></svg>
        </button>
        <button type="button" aria-label="Büyüt" className="flex w-[26px] items-center justify-center border-l border-r border-[#a7b0c0]">
          <svg viewBox="0 0 12 10" className="h-2.5 w-3">
            <rect x=".5" y=".5" width="11" height="9" rx="1" fill="#fff" stroke="#565c70" />
            <rect x="3.500" y="3.500" width="5" height="3" fill="#d5dde8" stroke="#565c70" />
          </svg>
        </button>
        <button type="button" aria-label="Kapat" className="flex w-[42px] items-center justify-center">
          <svg viewBox="0 0 12 10" className="h-2.5 w-3"><path d="M.5.500H4l2 2 2-2h3.500v1L8 5l3.500 3.500v1H8l-2-2-2 2H.5v-1L4 5 .5 1.500z" fill="#fff" stroke="#565c70" /></svg>
        </button>
      </div>
    </header>
  )
}

function HostStatus() {
  return (
    <footer className="flex h-[22px] items-center justify-end gap-[5px] bg-[#f3f3f3] pr-0.5 font-['Open_Sans',sans-serif] text-[11px] font-semibold text-black">
      <svg viewBox="0 0 16 16" className="size-4">
        <rect x="2" y=".5" width="12" height="15" rx="1" fill="#e4effa" stroke="#5b7ba4" />
        <circle cx="8" cy="7.500" r="4.500" fill="#bfe0fb" stroke="#2b83cf" strokeWidth="1.300" />
        <circle cx="8" cy="7.500" r="1.500" fill="#fff" stroke="#2b83cf" />
        <path d="M3.500 13.500h2M10.500 13.500h2" stroke="#2b4f80" />
      </svg>
      <svg viewBox="0 0 16 16" className="size-4">
        <circle cx="8" cy="8" r="7.300" fill="#eef1f6" stroke="#8a93a3" />
        <path d="M8 8 3 3a7 7 0 0 1 5-2z" fill="#cfe5c6" />
        <path d="M8 8l5 5a7 7 0 0 1-5 2z" fill="#d9cdea" />
        <circle cx="8" cy="8" r="2.500" fill="#a9cdf0" stroke="#4d88c7" />
      </svg>
      <svg viewBox="0 0 16 16" className="size-4">
        <path d="M1 1h12l2 2v12H1z" fill="#e1e1e1" stroke="#a4a4a4" />
        <path d="M4 1h8v5H4zM3.500 9h9v6h-9z" fill="#f8f8f8" stroke="#b5b5b5" />
        <path d="M9 2v3" stroke="#999" strokeWidth="2" />
      </svg>
      <svg viewBox="0 0 16 16" className="size-4">
        <path d="M5.500 1.500h9v7h-9z" fill="#54a8f1" stroke="#1c4f93" />
        <path d="M10 10.500h4" stroke="#1c4f93" />
        <path d="M1.500 5.500h9v6h-9z" fill="#8ccbfb" stroke="#1c4f93" />
        <path d="M3 13.500h6" stroke="#1c4f93" />
      </svg>
      <svg viewBox="0 0 16 16" className="size-4">
        <path d="M1 15l2-1M3 14q-1-3 1-5l5-5 4 4-5 5q-2 2-5 1z" fill="#f4f4f4" stroke="#a0a0a0" />
        <path d="M10 3l2-2.500 3.500 3L13 6z" fill="#ddd" stroke="#a0a0a0" />
      </svg>
      <svg viewBox="0 0 16 16" className="size-4">
        <path d="M8 3.500l1-1h5l1 1V6H8z" fill="#3b97d8" stroke="#256fa8" />
        <path d="M.5 4.500h15v10H.5z" fill="#7dcaf6" stroke="#2b83bf" />
        <path d="M1 5h14v3H1z" fill="#b7e4ff" />
      </svg>
      <span className="h-4 w-px bg-[#b5b5b5]" />
      <svg viewBox="0 0 16 16" className="size-4">
        <ellipse cx="8" cy="8" rx="5" ry="7.500" transform="rotate(45 8 8)" fill="#f3f3f3" stroke="#a0a0a0" />
        <path d="M6 4l6 6M9 7l3-3" stroke="#a0a0a0" fill="none" />
      </svg>
      <svg viewBox="0 0 16 16" className="size-4">
        <path d="M0 0h16v16H0z" fill="#55585e" />
        <path d="M2 2h12v12H2z" fill="#d8dade" />
        <path d="M6 3h4v5h3l-5 5-5-5h3z" fill="#26282c" />
      </svg>
      <span>Right Control</span>
      <svg viewBox="0 0 11 11" className="size-[11px] self-end" shapeRendering="crispEdges">
        <path d="M8 0h2v2H8zM4 4h2v2H4zM8 4h2v2H8zM0 8h2v2H0zM4 8h2v2H4zM8 8h2v2H8z" fill="#b8b8b8" />
      </svg>
    </footer>
  )
}

export default function App() {
  return (
    <div className="flex min-h-screen flex-col overflow-hidden bg-[#3a3d4a] font-['DejaVu_Sans_Condensed','DejaVu_Sans',sans-serif] text-[11px] leading-[14px] text-black">
      <HostTitle />
      <div className="mb-px ml-px mr-0.5 flex flex-1 flex-col bg-[#f3f3f3]">
        <nav className="flex h-[22px] items-center gap-[10px] pl-[5px] font-['Open_Sans',sans-serif] text-[11px] font-semibold">
          <button type="button">Makine</button>
          <button type="button">Aygıtlar</button>
          <button type="button">Yardım</button>
        </nav>
        <div className="flex flex-1 flex-col border-b border-t border-b-white border-t-[#a0a0a0] pt-px">
          <div className="flex flex-1 flex-col border border-b-[#a0a0a0] border-l-[#696969] border-r-0 border-t-[#696969]">
            <Guest />
          </div>
        </div>
        <HostStatus />
      </div>
    </div>
  )
}
